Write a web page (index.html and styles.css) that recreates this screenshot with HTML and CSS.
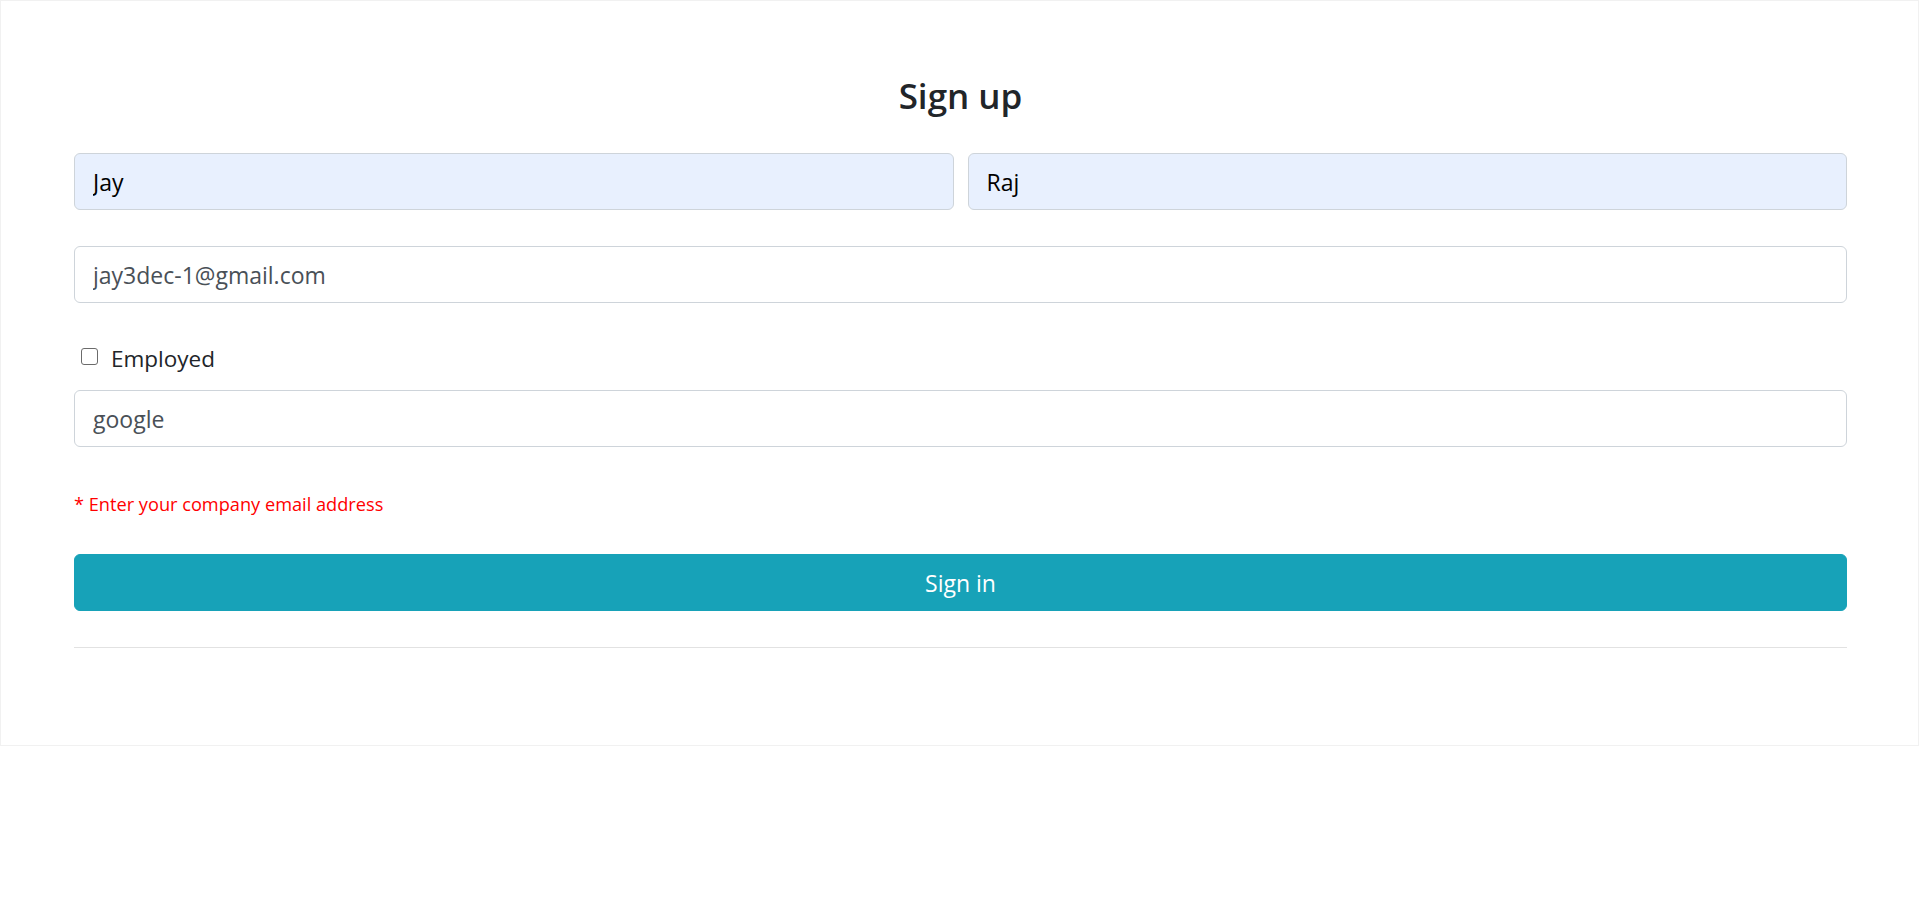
FILE: index.html
```html
<!DOCTYPE html>
<html lang="en">
<head>
<meta charset="utf-8">
<title>Sign up</title>
<link rel="stylesheet" href="styles.css">
</head>
<body>
<div class="card">
  <form class="form">
    <h3 class="title">Sign up</h3>
    <div class="name-row">
      <input class="field autofill" type="text" value="Jay">
      <input class="field autofill" type="text" value="Raj">
    </div>
    <input class="field email" type="email" value="jay3dec-1@gmail.com">
    <label class="check-row">
      <input class="check" type="checkbox">
      <span class="check-label">Employed</span>
    </label>
    <input class="field company" type="text" value="google">
    <p class="error">* Enter your company email address</p>
    <button class="btn" type="button">Sign in</button>
    <hr class="divider">
  </form>
</div>
</body>
</html>
```
FILE: styles.css
```css
html, body {
  margin: 0;
  padding: 0;
  background: #ffffff;
}
body {
  font-family: "Open Sans", "Noto Sans", sans-serif;
  color: #212529;
}
.card {
  margin-right: 1px;
  border: 1px solid #f1f1f1;
  padding: 74px 71px 97px 73px;
}
.form {
  display: flex;
  flex-direction: column;
}
.title {
  margin: 0;
  text-align: center;
  font-size: 35px;
  line-height: 42px;
  font-weight: 600;
  color: #212529;
}
.name-row {
  margin-top: 36px;
  display: grid;
  grid-template-columns: 1fr 1fr;
  column-gap: 14px;
}
.field {
  box-sizing: border-box;
  display: block;
  width: 100%;
  height: 57px;
  margin: 0;
  padding: 0 18px;
  border: 1px solid #ced4da;
  border-radius: 6px;
  background: #ffffff;
  font-family: "Open Sans", "Noto Sans", sans-serif;
  font-size: 23px;
  color: #495057;
  outline: none;
}
.autofill {
  background: #e8f0fe;
  color: #000000;
}
.email {
  margin-top: 36px;
}
.check-row {
  margin-top: 39px;
  display: flex;
  align-items: flex-start;
  height: 34px;
  padding-left: 7px;
}
.check {
  -webkit-appearance: none;
  appearance: none;
  box-sizing: border-box;
  width: 17px;
  height: 17px;
  margin: 6px 13px 0 0;
  border: 1.5px solid #6b6b6b;
  border-radius: 3px;
  background: #ffffff;
}
.check-label {
  font-size: 22.5px;
  line-height: 34px;
  color: #212529;
}
.company {
  margin-top: 14px;
}
.error {
  margin: 45px 0 0 0;
  font-size: 18.2px;
  line-height: 24px;
  color: #ff0000;
}
.btn {
  box-sizing: border-box;
  margin-top: 38px;
  height: 57px;
  width: 100%;
  border: 1px solid #17a2b8;
  border-radius: 6px;
  background: #17a2b8;
  color: #ffffff;
  font-family: "Open Sans", "Noto Sans", sans-serif;
  font-size: 23px;
}
.divider {
  margin: 36px 0 0 0;
  border: 0;
  border-top: 1px solid #e2e2e2;
  height: 0;
}
```
